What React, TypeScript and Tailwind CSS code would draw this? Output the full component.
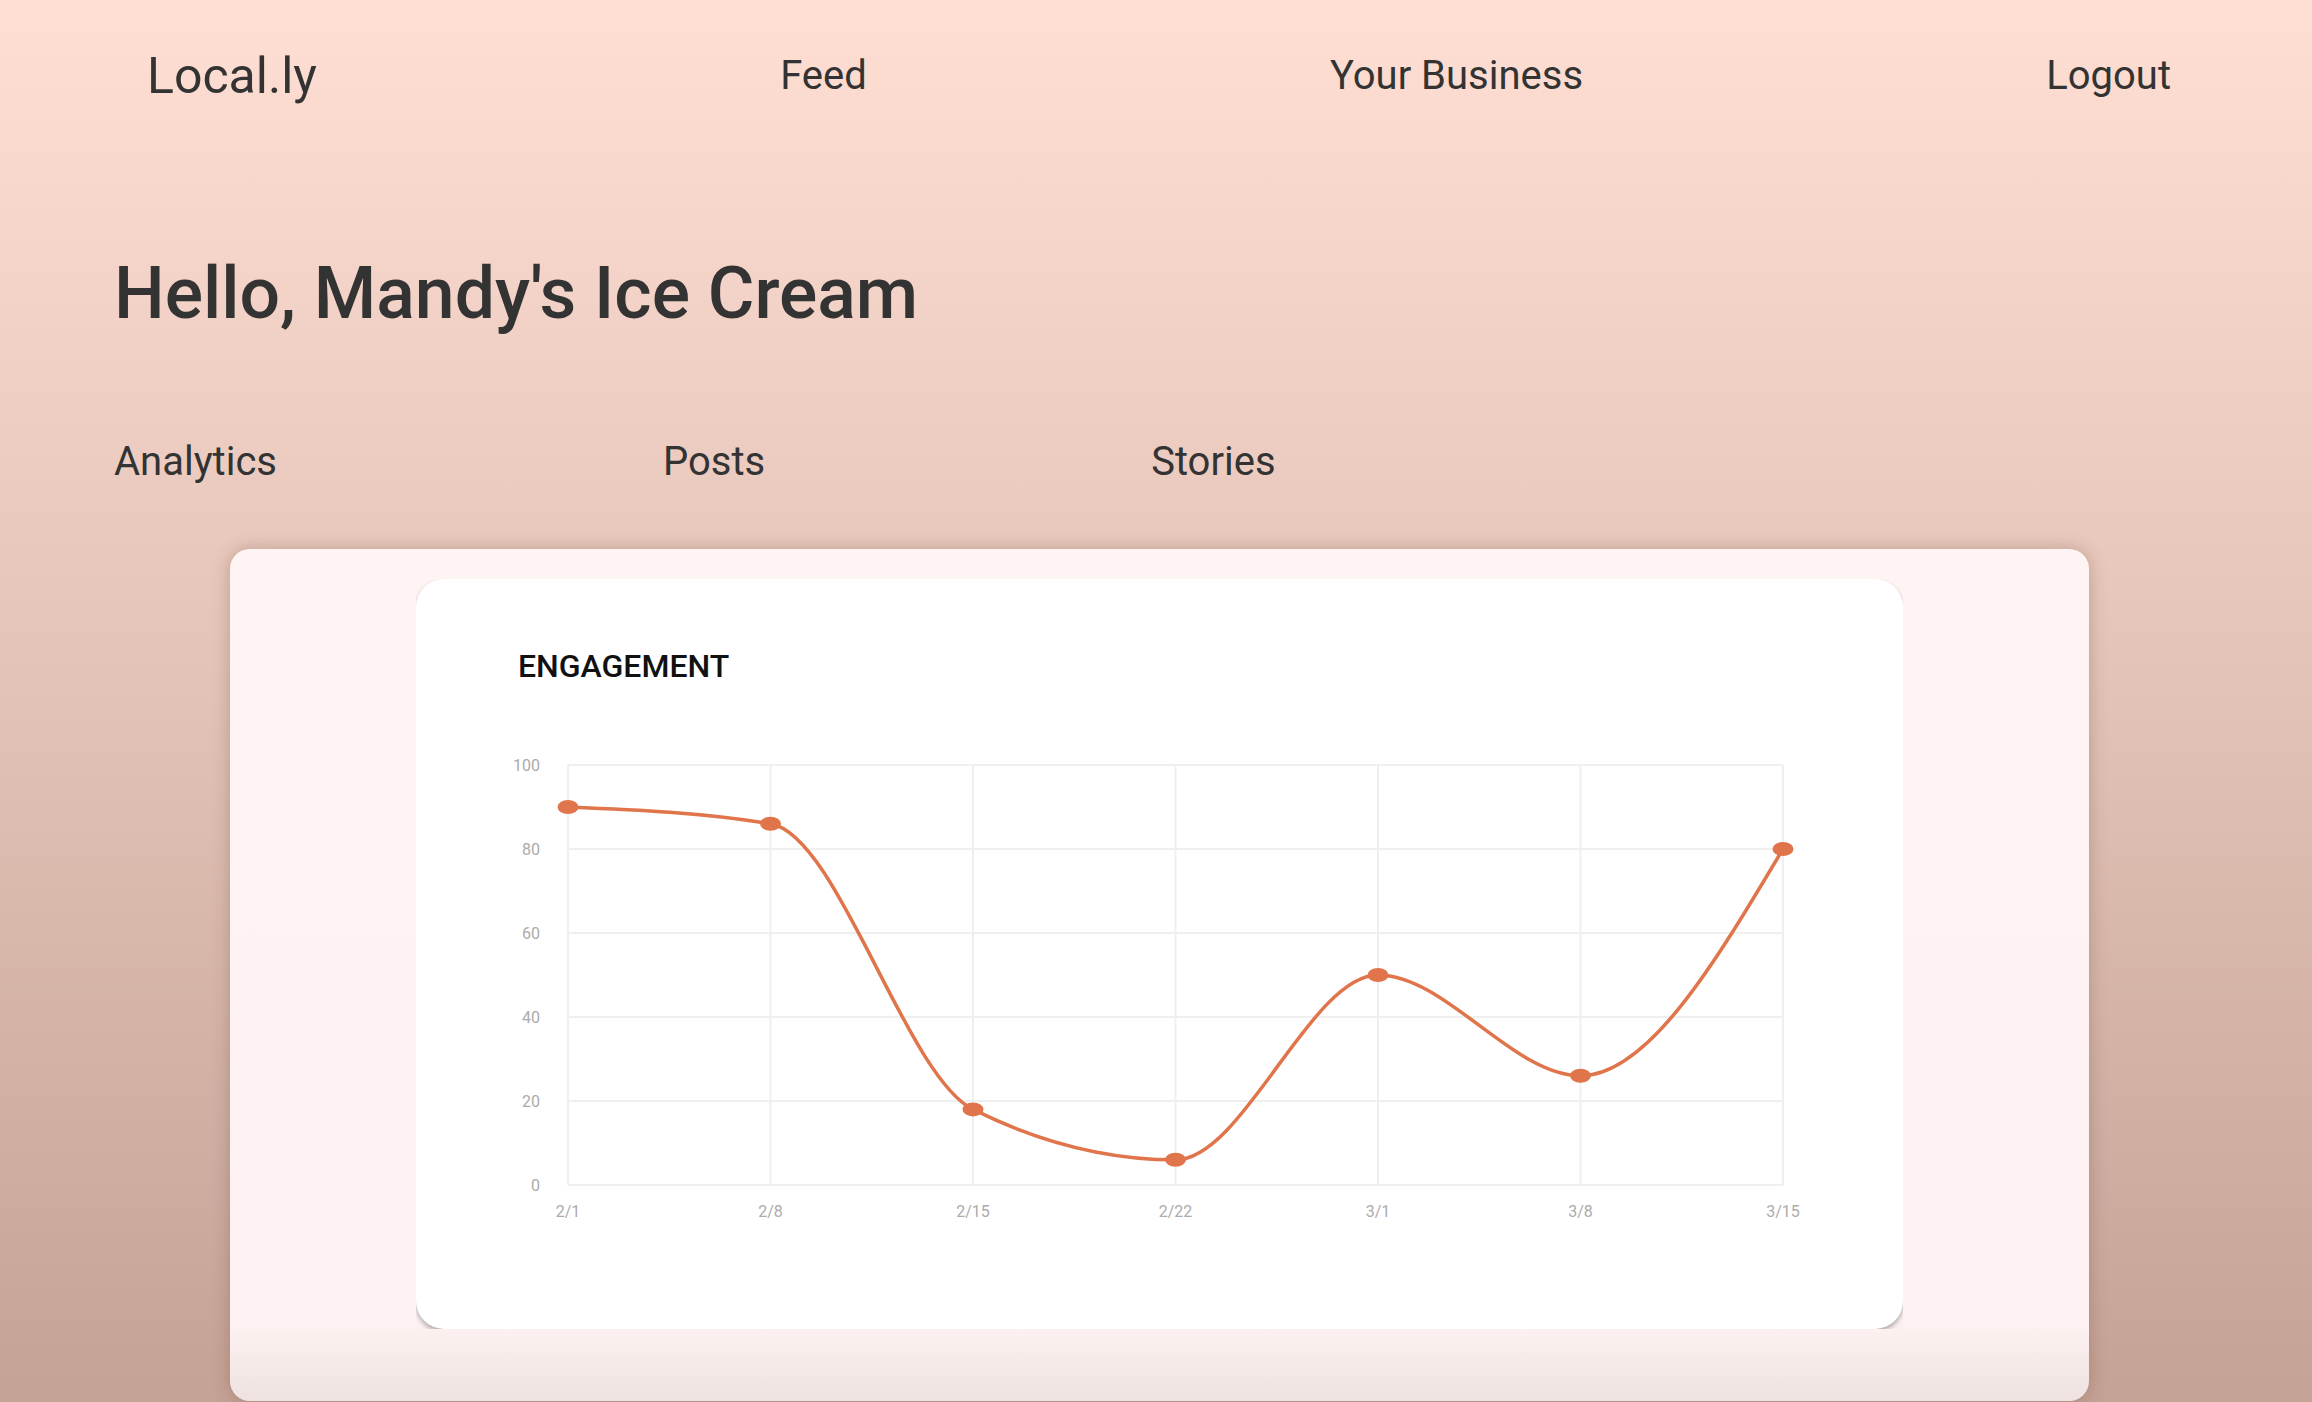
import React from 'react';

const data = [
  { label: '2/1', value: 90 },
  { label: '2/8', value: 86 },
  { label: '2/15', value: 18 },
  { label: '2/22', value: 6 },
  { label: '3/1', value: 50 },
  { label: '3/8', value: 26 },
  { label: '3/15', value: 80 },
];

// plot box inside the svg
const W = 1488;
const H = 520;
const left = 152;
const right = 1367;
const top = 36;
const bottom = 456;

const xAt = (i: number) => left + ((right - left) * i) / (data.length - 1);
const yAt = (v: number) => bottom - ((bottom - top) * v) / 100;

const sign = (n: number) => (n < 0 ? -1 : 1);

// same shape as a "monotone" line from recharts / d3
function monotonePath(pts: { x: number; y: number }[]) {
  const n = pts.length;
  const m: number[] = new Array(n).fill(0);
  for (let i = 1; i < n - 1; i++) {
    const h0 = pts[i].x - pts[i - 1].x;
    const h1 = pts[i + 1].x - pts[i].x;
    const s0 = (pts[i].y - pts[i - 1].y) / h0;
    const s1 = (pts[i + 1].y - pts[i].y) / h1;
    const p = (s0 * h1 + s1 * h0) / (h0 + h1);
    m[i] = (sign(s0) + sign(s1)) * Math.min(Math.abs(s0), Math.abs(s1), 0.5 * Math.abs(p)) || 0;
  }
  const hA = pts[1].x - pts[0].x;
  m[0] = ((3 * (pts[1].y - pts[0].y)) / hA - m[1]) / 2;
  const hB = pts[n - 1].x - pts[n - 2].x;
  m[n - 1] = ((3 * (pts[n - 1].y - pts[n - 2].y)) / hB - m[n - 2]) / 2;

  let d = `M${pts[0].x},${pts[0].y}`;
  for (let i = 0; i < n - 1; i++) {
    const dx = (pts[i + 1].x - pts[i].x) / 3;
    d += ` C${pts[i].x + dx},${pts[i].y + dx * m[i]} ${pts[i + 1].x - dx},${pts[i + 1].y - dx * m[i + 1]} ${pts[i + 1].x},${pts[i + 1].y}`;
  }
  return d;
}

const EngagementChart: React.FC = () => {
  const pts = data.map((d, i) => ({ x: xAt(i), y: yAt(d.value) }));
  const ticks = [0, 20, 40, 60, 80, 100];

  return (
    <svg width={W} height={H} viewBox={`0 0 ${W} ${H}`} className="block">
      {/* grid */}
      {ticks.map((t) => (
        <line key={t} x1={left} x2={right} y1={yAt(t)} y2={yAt(t)} stroke="#efefef" strokeWidth={2} />
      ))}
      {data.map((d, i) => (
        <line key={d.label} x1={xAt(i)} x2={xAt(i)} y1={top} y2={bottom} stroke="#efefef" strokeWidth={2} />
      ))}

      {/* y labels */}
      {ticks.map((t) => (
        <text
          key={t}
          x={124}
          y={yAt(t)}
          textAnchor="end"
          dominantBaseline="central"
          fill="#ababab"
          fontSize={16}
          fontFamily="Roboto, 'Liberation Sans', sans-serif"
        >
          {t}
        </text>
      ))}

      {/* x labels */}
      {data.map((d, i) => (
        <text
          key={d.label}
          x={xAt(i)}
          y={482}
          textAnchor="middle"
          dominantBaseline="central"
          fill="#ababab"
          fontSize={16}
          fontFamily="Roboto, 'Liberation Sans', sans-serif"
        >
          {d.label}
        </text>
      ))}

      <path d={monotonePath(pts)} fill="none" stroke="#e0744a" strokeWidth={3.5} />
      {pts.map((p, i) => (
        <ellipse key={i} cx={p.x} cy={p.y} rx={10.5} ry={7} fill="#e0744a" />
      ))}
    </svg>
  );
};

const App: React.FC = () => {
  return (
    <div
      className="h-[1402px] overflow-hidden bg-[linear-gradient(180deg,#ffdfd3_0%,#e2c2b6_50%,#c5a296_100%)] text-[#333333]"
      style={{ fontFamily: "Roboto, 'Liberation Sans', sans-serif" }}
    >
      {/* top nav */}
      <nav className="flex h-[152px] items-center justify-between pl-[147px] pr-[141px]">
        <a className="text-[50px] leading-none">Local.ly</a>
        <a className="text-[40px] leading-none">Feed</a>
        <a className="text-[40px] leading-none">Your Business</a>
        <a className="text-[40px] leading-none">Logout</a>
      </nav>

      <h1 className="mt-[106px] pl-[114px] text-[71.5px] leading-none font-medium">Hello, Mandy's Ice Cream</h1>

      {/* tabs */}
      <div className="mt-[112px] flex gap-[386px] pl-[114px] text-[40px] leading-none">
        <span>Analytics</span>
        <span>Posts</span>
        <span>Stories</span>
      </div>

      {/* dashboard panel */}
      <div className="mt-[67px] ml-[230px] w-[1859px] rounded-[20px] bg-[linear-gradient(180deg,#fef4f3_0%,#fdf2f1_91%,#eee2e0_100%)] px-[186px] pt-[30px] pb-[72px] shadow-[0_0_18px_rgba(90,50,40,0.28)]">
        <div className="overflow-hidden">
          <div className="rounded-[28px] bg-white pt-[71px] pb-[80px] shadow-[0_3px_5px_rgba(0,0,0,0.3)]">
            <h2 className="pl-[102px] text-[32px] leading-none font-medium text-[#111111]">ENGAGEMENT</h2>
            <div className="mt-[47px]">
              <EngagementChart />
            </div>
          </div>
        </div>
      </div>
    </div>
  );
};

export default App;
